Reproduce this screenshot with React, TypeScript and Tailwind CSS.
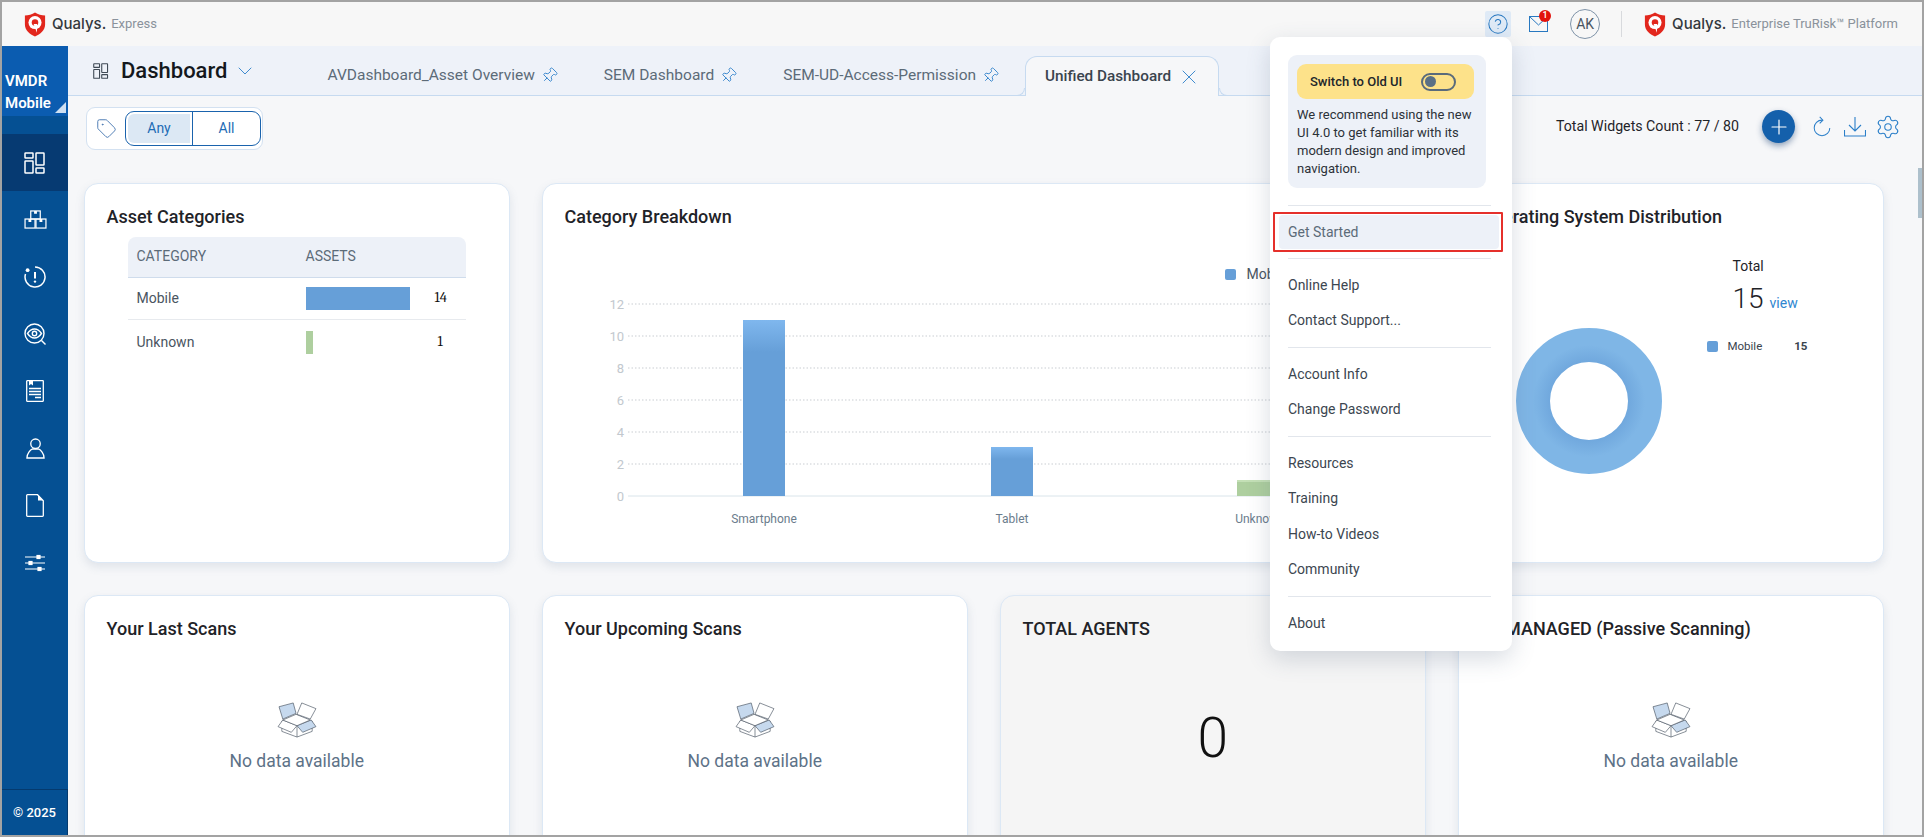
import { ChevronDown, CircleHelp, Pin, Plus, Settings, Tag, X } from "lucide-react";

const shieldLogo = (
  <svg viewBox="0 0 22 26" className="h-[25px] w-[22px] shrink-0">
    <path d="M11 0.5C14 2.6 18 3.6 21.5 3.6V13C21.5 19 16.5 23 11 25.5C5.5 23 0.5 19 0.5 13V3.6C4 3.6 8 2.6 11 0.5Z" fill="#e2271d" />
    <circle cx="11" cy="11" r="6.8" fill="#fff" />
    <circle cx="11" cy="11" r="3.4" fill="#e2271d" />
    <path d="M9.6 12.5L13.2 12.5L13 21.5Z" fill="#fff" />
  </svg>
);

function DashIcon({ className }: { className?: string }) {
  return (
    <svg viewBox="0 0 22 22" fill="none" stroke="currentColor" strokeWidth="1.5" className={className}>
      <rect x="1" y="1" width="8" height="5" rx="0.5" />
      <rect x="1" y="9" width="8" height="12" rx="0.5" />
      <rect x="12" y="1" width="8" height="12" rx="0.5" />
      <rect x="12" y="16" width="8" height="5" rx="0.5" />
    </svg>
  );
}

const navIcons = [
  <DashIcon className="h-[22px] w-[22px]" />,
  <svg viewBox="0 0 24 20" fill="none" stroke="currentColor" strokeWidth="1.3" className="h-[19px] w-[23px]">
    <rect x="7" y="1" width="10" height="8.5" />
    <rect x="1" y="9.5" width="10.5" height="9.5" />
    <rect x="12.5" y="9.5" width="10.5" height="9.5" />
    <path d="M10.5 1h3v3h-3zM4.6 9.5h3v3h-3zM16.2 9.5h3v3h-3z" fill="currentColor" stroke="none" />
  </svg>,
  <svg viewBox="0 0 22 22" fill="none" stroke="currentColor" strokeWidth="1.5" className="h-[22px] w-[22px]">
    <path d="M11 1A10 10 0 1 1 1.5 8" />
    <circle cx="3.6" cy="4.2" r="1.9" fill="currentColor" stroke="none" />
    <path d="M11 6v6.4" strokeWidth="2" />
    <circle cx="11" cy="15.6" r="1.2" fill="currentColor" stroke="none" />
  </svg>,
  <svg viewBox="0 0 22 22" fill="none" stroke="currentColor" strokeWidth="1.4" className="h-[22px] w-[22px]">
    <circle cx="10.5" cy="10.5" r="9.5" />
    <path d="M3.5 10.5C6 6.8 8.2 6 10.5 6s4.5.8 7 4.5C15 14.2 12.8 15 10.5 15s-4.5-.8-7-4.5Z" />
    <circle cx="10.5" cy="10.5" r="2.2" />
    <path d="M17.5 17.5L21.5 21.5" />
  </svg>,
  <svg viewBox="0 0 18 22" fill="none" stroke="currentColor" strokeWidth="1.3" className="h-[22px] w-[18px]">
    <rect x="0.7" y="0.7" width="16.6" height="20.6" rx="0.5" />
    <path d="M3 1v4.5l2-1.5 2 1.5V1" fill="currentColor" stroke="none" />
    <path d="M3 8.5h12M3 11.5h12M3 14.5h12M9 17.5h6" />
  </svg>,
  <svg viewBox="0 0 20 22" fill="none" stroke="currentColor" strokeWidth="1.4" className="h-[21px] w-[19px]">
    <circle cx="10" cy="6" r="5" />
    <path d="M1 21c0-5 3.5-8.5 6-9.5h6c2.5 1 6 4.5 6 9.5Z" />
  </svg>,
  <svg viewBox="0 0 18 23" fill="none" stroke="currentColor" strokeWidth="1.3" className="h-[23px] w-[18px]">
    <path d="M1.5.7h10l5.8 6v14.8a.8.8 0 0 1-.8.8H1.5a.8.8 0 0 1-.8-.8V1.5a.8.8 0 0 1 .8-.8Z" />
    <path d="M12 1v5.5h5" fill="currentColor" stroke="none" />
  </svg>,
  <svg viewBox="0 0 22 18" fill="none" stroke="currentColor" strokeWidth="1.2" className="h-[18px] w-[22px]">
    <path d="M1 3h20M1 9h20M1 15h20" />
    <rect x="13" y="1.5" width="3" height="3" fill="currentColor" />
    <rect x="5" y="7.5" width="3" height="3" fill="currentColor" />
    <rect x="14" y="13.5" width="3" height="3" fill="currentColor" />
  </svg>,
];

function EmptyBox() {
  return (
    <svg viewBox="0 0 44 38" className="h-[36px] w-[42px]" fill="none" stroke="#4b5563" strokeWidth="0.7">
      <path d="M6 20v11l16 6 16-6V20M22 25v12" />
      <path d="M22 25L7 19l-5 7 14 6 6-7Z" fill="#fff" />
      <path d="M22 25l15-6 5 7-14 6-6-7Z" fill="#c6d9ee" />
      <path d="M7 19l14-6 15 6-14 6-15-6Z" fill="#fff" />
      <path d="M3 5L18 1l3 11-14 6L3 5Z" fill="#c6d9ee" />
      <path d="M27 1l15 6-6 11-14-5 5-12Z" fill="#fff" />
    </svg>
  );
}

function NoData() {
  return (
    <div className="mt-[61px] flex flex-col items-center gap-[10px]">
      <EmptyBox />
      <span className="text-[17.5px] text-[#5d7287]">No data available</span>
    </div>
  );
}

function Card({ title, children, className = "bg-white" }: { title: string; children?: React.ReactNode; className?: string }) {
  return (
    <div className={`h-[380px] rounded-[14px] border border-[#dce8f5] px-[22px] pt-[21px] shadow-[0_4px_10px_rgba(90,110,140,0.14)] ${className}`}>
      <h3 className="whitespace-nowrap text-[18px] font-medium leading-[24px] text-[#1f2328]">{title}</h3>
      {children}
    </div>
  );
}

function BarChart() {
  const ticks = [12, 10, 8, 6, 4, 2, 0];
  return (
    <svg viewBox="0 0 700 300" className="absolute left-[58px] top-[100px] h-[300px] w-[700px]">
      <defs>
        <linearGradient id="blueBar" x1="0" y1="0" x2="0" y2="1">
          <stop offset="0" stopColor="#7fb7ee" />
          <stop offset="1" stopColor="#669fd8" />
        </linearGradient>
      </defs>
      {ticks.map((t, i) => (
        <g key={t}>
          <text x="24" y={26 + i * 32} textAnchor="end" fontSize="13" fill="#c2c8ce" fontFamily="Roboto">{t}</text>
          <line x1="28" x2="690" y1={21 + i * 32} y2={21 + i * 32} stroke={t === 0 ? "#d9e4ea" : "#c9cdd2"} strokeDasharray={t === 0 ? undefined : "1.5 2"} />
        </g>
      ))}
      <rect x="143" y="37" width="42" height="176" fill="#669fd8" />
      <rect x="143" y="37" width="42" height="32" fill="url(#blueBar)" />
      <rect x="391" y="164" width="42" height="49" fill="#669fd8" />
      <rect x="391" y="164" width="42" height="12" fill="url(#blueBar)" />
      <rect x="637" y="197" width="42" height="16" fill="#aecf9f" />
      <rect x="637" y="197" width="42" height="2" fill="#c4e0b6" />
      <g fontSize="12" fill="#6b7c8c" fontFamily="Roboto" textAnchor="middle">
        <text x="164" y="240">Smartphone</text>
        <text x="412" y="240">Tablet</text>
        <text x="660" y="240">Unknown</text>
      </g>
    </svg>
  );
}

function Donut() {
  return (
    <svg viewBox="0 0 148 148" className="h-[148px] w-[148px]">
      <defs>
        <radialGradient id="ring">
          <stop offset="0.5" stopColor="#679fd8" />
          <stop offset="1" stopColor="#7fb6e6" />
        </radialGradient>
      </defs>
      <circle cx="74" cy="74" r="56" fill="none" stroke="url(#ring)" strokeWidth="34" />
    </svg>
  );
}

function Tab({ label }: { label: string }) {
  return (
    <div className="flex items-center gap-[6px] text-[15.5px] text-[#5c6b78]">
      {label}
      <Pin size={17} strokeWidth={1.2} className="rotate-45 text-[#2b7fc9]" />
    </div>
  );
}

const menuGroups = [
  ["Online Help", "Contact Support..."],
  ["Account Info", "Change Password"],
  ["Resources", "Training", "How-to Videos", "Community"],
  ["About"],
];

function HelpMenu() {
  return (
    <div className="absolute left-[1268px] top-[35px] z-20 w-[242px] rounded-[10px] bg-white px-[18px] pb-[1px] pt-[18px] text-[14px] text-[#3c4650] shadow-[0_8px_24px_rgba(60,80,110,0.2)]">
      <div className="w-[198px] rounded-[9px] bg-[#edf1f8] pb-[10px] pl-[9px] pr-[12px] pt-[9px]">
        <div className="flex h-[35px] items-center rounded-[9px] bg-[#fde28a] pl-[13px] text-[13px] font-medium text-[#22262b]">
          Switch to Old UI
          <span className="ml-[19px] flex h-[18px] w-[35px] items-center rounded-full border-2 border-[#5a6b7b] pl-[2px]">
            <span className="h-[11px] w-[11px] rounded-full bg-[#5a7085]" />
          </span>
        </div>
        <p className="-mr-[6px] mt-[7px] text-[13px] leading-[18px] text-[#2c3238]">
          We recommend using the new UI 4.0 to get familiar with its modern design and improved navigation.
        </p>
      </div>
      <div className="mt-[17px] w-[203px] border-t border-[#e2e6ec]" />
      <div className="relative my-[9px] -ml-[9px] flex h-[34px] w-[220px] items-center rounded-[4px] bg-[#edf1f8] pl-[9px] text-[#5c6b78]">
        Get Started
        <span className="absolute -inset-[3px] -left-[6px] -right-[4px] rounded-[1px] border-2 border-[#e5302b]" />
      </div>
      {menuGroups.map((group) => (
        <div key={group[0]} className="w-[203px] border-t border-[#e2e6ec] py-[8.5px]">
          {group.map((item) => (
            <div key={item} className="flex h-[35.5px] items-center">{item}</div>
          ))}
        </div>
      ))}
    </div>
  );
}

export default function App() {
  return (
    <div className="relative flex h-[837px] w-[1924px] flex-col overflow-hidden border-2 border-[#a3a3a3] font-[Roboto,sans-serif]">
      <header className="flex h-[44px] shrink-0 items-center bg-[#f7f7f7] pl-[22px] pr-6">
        {shieldLogo}
        <span className="ml-[6px] font-[Inter,sans-serif] text-[15px] font-medium text-[#33383d]">Qualys.</span>
        <span className="ml-[5px] text-[13px] text-[#8a929b]">Express</span>
        <div className="ml-auto flex items-center">
          <span className="flex h-[26px] w-[26px] items-center justify-center rounded-[2px] bg-[#dfeaf6]">
            <CircleHelp size={22} strokeWidth={1.1} className="text-[#2878c0]" />
          </span>
          <span className="relative ml-[18px] flex">
            <svg viewBox="0 0 19 16" fill="none" stroke="#2878c0" strokeWidth="1" className="h-4 w-[19px]">
              <rect x="0.5" y="0.5" width="18" height="15" />
              <path d="M0.5 0.5L9.5 9l9-8.5" />
            </svg>
            <span className="absolute -right-[3px] -top-[6px] flex h-3 w-3 items-center justify-center rounded-full bg-[#e2120c] text-[9px] font-medium text-white">1</span>
          </span>
          <span className="ml-[22px] flex h-[30px] w-[30px] items-center justify-center rounded-full border border-[#7f93a8] text-[14px] text-[#4a5561]">AK</span>
          <span className="ml-[21px] h-[26px] w-px bg-[#d8dadd]" />
          <span className="ml-[22px]">{shieldLogo}</span>
          <span className="ml-[6px] font-[Inter,sans-serif] text-[15px] font-medium text-[#33383d]">Qualys.</span>
          <span className="ml-[5px] text-[13px] text-[#8a929b]">Enterprise TruRisk™ Platform</span>
        </div>
      </header>

      <div className="flex min-h-0 flex-1">
        <aside className="flex w-[66px] shrink-0 flex-col bg-[#055093] text-white">
          <div className="relative flex h-[70px] flex-col justify-end bg-[#0b5cb0] pb-[2px] pl-[3px] text-[15px] font-semibold leading-[22px]">
            <span>VMDR</span>
            <span>Mobile</span>
            <span className="absolute bottom-[3px] right-[2px] h-0 w-0 border-b-[11px] border-l-[11px] border-b-[#cfe0f2] border-l-transparent" />
          </div>
          <div className="mt-[18px] flex flex-1 flex-col">
            {navIcons.map((icon, i) => (
              <div key={i} className={`flex h-[57.2px] items-center justify-center ${i === 0 ? "bg-[#063a72]" : ""}`}>{icon}</div>
            ))}
          </div>
          <div className="flex h-[46px] items-center justify-center border-r border-t border-[#053a6e] text-[13px] font-medium">© 2025</div>
        </aside>

        <main className="relative min-w-0 flex-1 bg-[#f6f7f9]">
          <div className="flex h-[50px] items-center border-b border-[#c6daf0] bg-[#eef2f9] pl-[25px]">
            <DashIcon className="h-4 w-4 text-[#3f4a55]" />
            <span className="ml-[12px] text-[22px] font-medium text-[#14181d]">Dashboard</span>
            <ChevronDown size={24} strokeWidth={0.9} className="ml-[6px] text-[#2b7fc9]" />
            <div className="ml-[70px] flex items-center gap-[46px] self-stretch pt-[10px]">
              <Tab label="AVDashboard_Asset Overview" />
              <Tab label="SEM Dashboard" />
              <Tab label="SEM-UD-Access-Permission" />
            </div>
            <div className="relative -mb-px ml-[26px] flex h-[40px] w-[194px] items-center gap-[6px] self-end rounded-t-[12px] border border-b-0 border-[#c6daf0] bg-[#f6f7f9] pl-[19px] text-[15.3px] font-medium text-[#3a444e]">
              Unified Dashboard
              <X size={24} strokeWidth={0.9} className="text-[#2b7fc9]" />
              <span className="absolute -left-[9px] bottom-0 h-[8px] w-[8px] rounded-br-[8px] border-b border-r border-[#c6daf0]" />
              <span className="absolute -right-[9px] bottom-0 h-[8px] w-[8px] rounded-bl-[8px] border-b border-l border-[#c6daf0]" />
            </div>
          </div>

          <div className="flex h-[87px] items-start pl-[18px] pr-[21px] pt-[11px]">
            <div className="flex h-[43px] w-[177px] items-center gap-[8px] rounded-[9px] border border-[#d3e1f1] bg-white pl-[9px]">
              <Tag size={21} strokeWidth={1.1} className="text-[#4c7bb3]" />
              <div className="flex h-[35px] w-[136px] overflow-hidden rounded-[9px] border border-[#1a63ad] text-[14px] text-[#1e6cb5]">
                <span className="m-[2px] flex w-[62px] items-center justify-center rounded-l-[6px] bg-[#dce8f4]">Any</span>
                <span className="flex flex-1 items-center justify-center border-l border-[#1a63ad]">All</span>
              </div>
            </div>
            <div className="ml-auto flex items-center pt-[3px]">
              <span className="text-[14.2px] text-[#1f2328]">Total Widgets Count : 77 / 80</span>
              <span className="ml-[23px] flex h-[33px] w-[33px] items-center justify-center rounded-full bg-[#1460ab] shadow-[0_3px_6px_rgba(20,60,110,0.45)]">
                <Plus size={24} strokeWidth={1.2} className="text-white" />
              </span>
              <svg viewBox="0 0 24 24" fill="none" stroke="#2b7fc9" strokeWidth="1.1" className="ml-[16px] h-6 w-[22px]">
                <path d="M20.5 13A8.5 8.5 0 1 1 12 4.5" />
                <path d="M9.5 1L13 4.5L9.5 8" />
              </svg>
              <svg viewBox="0 0 22 20" fill="none" stroke="#2b7fc9" strokeWidth="1.1" className="ml-[11px] h-5 w-[22px]">
                <path d="M.5 13v6h21v-6M11 0v14M5 8l6 6 6-6" />
              </svg>
              <Settings size={26} strokeWidth={1} className="ml-[9px] text-[#2b7fc9]" />
            </div>
          </div>

          <div className="grid grid-cols-4 gap-x-[31.5px] gap-y-[32px] pl-[15.5px] pr-[38px]">
            <Card title="Asset Categories">
              <table className="ml-[21px] mt-[8px] w-[338px] text-[14px] text-[#4a5561]">
                <thead>
                  <tr className="h-[40px] border-b border-[#cfdcec] bg-[#edf1f8] text-left text-[#5c6b78]">
                    <th className="w-[178px] rounded-tl-[8px] pl-[9px] font-normal">CATEGORY</th>
                    <th className="rounded-tr-[8px] font-normal">ASSETS</th>
                  </tr>
                </thead>
                <tbody>
                  <tr className="h-[42px] border-b border-[#e7eaee]">
                    <td className="pl-[9px]">Mobile</td>
                    <td>
                      <div className="flex items-center">
                        <span className="h-[23px] w-[104px] bg-[#669fd8]" />
                        <span className="ml-[25px] font-serif text-[14.5px] text-[#111]">14</span>
                      </div>
                    </td>
                  </tr>
                  <tr className="h-[46px]">
                    <td className="pl-[9px]">Unknown</td>
                    <td>
                      <div className="flex items-center">
                        <span className="h-[23px] w-[7px] bg-[#aecf9f]" />
                        <span className="ml-[125px] font-serif text-[14.5px] text-[#111]">1</span>
                      </div>
                    </td>
                  </tr>
                </tbody>
              </table>
            </Card>

            <div className="relative col-span-2">
              <Card title="Category Breakdown" />
              <BarChart />
              <div className="absolute left-[683px] top-[81px] flex items-center gap-[11px] text-[14px] text-[#4a5561]">
                <span className="h-[11px] w-[11px] rounded-[2px] bg-[#669fd8]" />
                Mobile
              </div>
            </div>

            <div className="relative">
              <Card title="Operating System Distribution" />
              <div className="absolute left-[57px] top-[144px]">
                <Donut />
              </div>
              <div className="absolute left-[275px] top-[73px] flex flex-col text-[#1f2328]">
                <span className="text-[14px]">Total</span>
                <span className="mt-[1px] flex items-baseline gap-[6px]">
                  <span className="text-[28px] font-light">15</span>
                  <span className="text-[14px] text-[#2f86d0]">view</span>
                </span>
                <span className="-ml-[26px] mt-[18px] flex items-center text-[11.5px] text-[#3a444e]">
                  <span className="mr-[10px] h-[11px] w-[11px] rounded-[2px] bg-[#669fd8]" />
                  Mobile
                  <span className="ml-[32px] font-bold">15</span>
                </span>
              </div>
            </div>

            <Card title="Your Last Scans"><NoData /></Card>
            <Card title="Your Upcoming Scans"><NoData /></Card>
            <Card title="TOTAL AGENTS" className="bg-[#f5f5f5]">
              <div className="mt-[56px] text-center text-[55px] font-light text-[#111]">0</div>
            </Card>
            <Card title="UNMANAGED (Passive Scanning)"><NoData /></Card>
          </div>

          <span className="absolute right-0 top-[122px] h-[50px] w-1 bg-[#adc0cc]" />
        </main>
      </div>

      <HelpMenu />
    </div>
  );
}
